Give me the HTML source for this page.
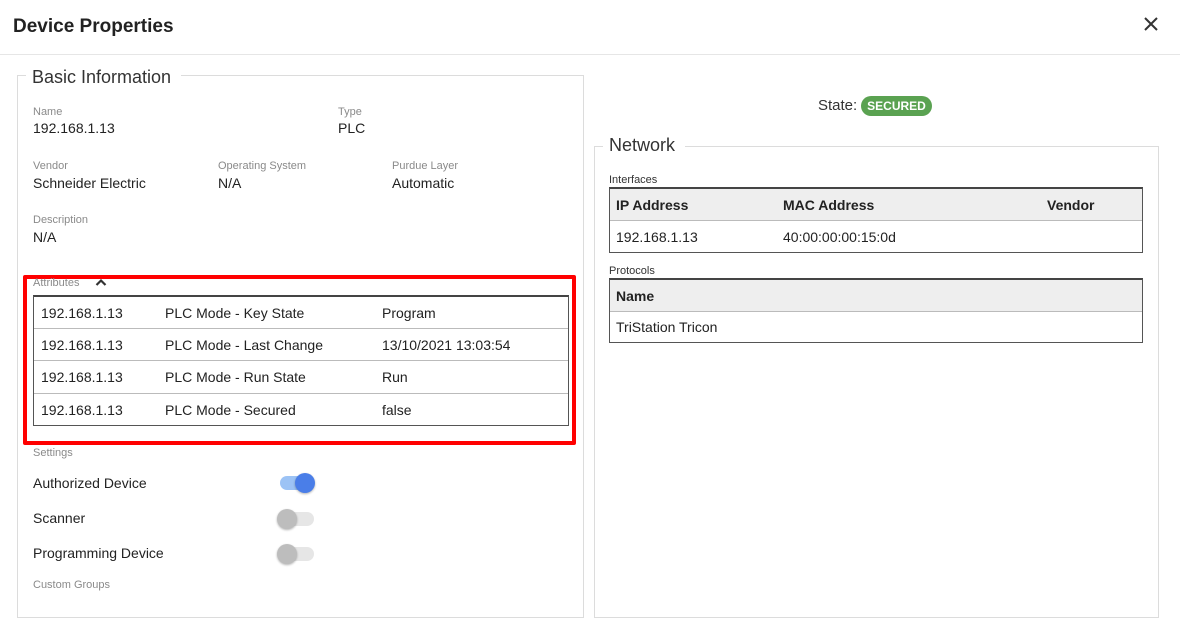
<!DOCTYPE html>
<html><head><meta charset="utf-8"><style>
*{margin:0;padding:0;box-sizing:border-box}
body{width:1180px;height:622px;background:#fff;font-family:"Liberation Sans",sans-serif;color:#222;position:relative;overflow:hidden}
.a{position:absolute;white-space:nowrap}
.lbl{font-size:11px;color:#8a8a8a;line-height:12px}
.val{font-size:14px;color:#222;line-height:16px}
.fs{position:absolute;border:1px solid #dcdcdc}
.leg{position:absolute;background:#fff;padding:0 10px 0 6px;font-size:18px;color:#333;line-height:22px}
.tbl{position:absolute;border:1px solid #555;border-top:2px solid #444}
.row{position:relative;border-bottom:1px solid #bbb;font-size:14px}
.row span{position:absolute;top:50%;transform:translateY(-50%);white-space:nowrap}
.tg{position:absolute;width:34px;height:14px;border-radius:7px}
.kn{position:absolute;width:20px;height:20px;border-radius:50%;top:-3px;box-shadow:0 1px 2px rgba(0,0,0,.3)}
</style></head><body>
<div class="a" style="left:13px;top:16px;font-size:19px;font-weight:bold;color:#222">Device Properties</div>
<svg class="a" style="left:1143px;top:16px" width="16" height="16" viewBox="0 0 16 16"><path d="M2 2L14 14M14 2L2 14" stroke="#333" stroke-width="2"/></svg>
<div class="a" style="left:0;top:54px;width:1180px;height:1px;background:#e6e6e6"></div>

<div class="fs" style="left:17px;top:75px;width:567px;height:543px"></div>
<div class="leg" style="left:26px;top:66px">Basic Information</div>
<div class="a lbl" style="left:33px;top:106px">Name</div>
<div class="a val" style="left:33px;top:120px">192.168.1.13</div>
<div class="a lbl" style="left:338px;top:106px">Type</div>
<div class="a val" style="left:338px;top:120px">PLC</div>
<div class="a lbl" style="left:33px;top:160px">Vendor</div>
<div class="a val" style="left:33px;top:175px">Schneider Electric</div>
<div class="a lbl" style="left:218px;top:160px">Operating System</div>
<div class="a val" style="left:218px;top:175px">N/A</div>
<div class="a lbl" style="left:392px;top:160px">Purdue Layer</div>
<div class="a val" style="left:392px;top:175px">Automatic</div>
<div class="a lbl" style="left:33px;top:214px">Description</div>
<div class="a val" style="left:33px;top:229px">N/A</div>
<div class="tbl" style="left:33px;top:295px;width:536px;height:131px">
<div class="row" style="height:32px"><span style="left:7px">192.168.1.13</span><span style="left:131px">PLC Mode - Key State</span><span style="left:348px">Program</span></div>
<div class="row" style="height:32px"><span style="left:7px">192.168.1.13</span><span style="left:131px">PLC Mode - Last Change</span><span style="left:348px">13/10/2021 13:03:54</span></div>
<div class="row" style="height:33px"><span style="left:7px">192.168.1.13</span><span style="left:131px">PLC Mode - Run State</span><span style="left:348px">Run</span></div>
<div class="row" style="height:31px;border-bottom:none"><span style="left:7px">192.168.1.13</span><span style="left:131px">PLC Mode - Secured</span><span style="left:348px">false</span></div>
</div>
<div class="a" style="left:23px;top:275px;width:553px;height:170px;border:4px solid #f00;border-radius:2px"></div>
<div class="a lbl" style="left:33px;top:277px;z-index:2">Attributes</div>
<svg class="a" style="left:94px;top:278px;z-index:2" width="14" height="9" viewBox="0 0 14 9"><path d="M2.5 7L7 2.5L11.5 7" stroke="#333" stroke-width="2.2" fill="none"/></svg>
<div class="a lbl" style="left:33px;top:447px">Settings</div>
<div class="a val" style="left:33px;top:475px">Authorized Device</div>
<div class="tg" style="left:280px;top:476px;background:#9cc3f5"><div class="kn" style="left:15px;background:#4a7ee8"></div></div>
<div class="a val" style="left:33px;top:510px">Scanner</div>
<div class="tg" style="left:280px;top:512px;background:#e6e6e6"><div class="kn" style="left:-3px;background:#bdbdbd"></div></div>
<div class="a val" style="left:33px;top:545px">Programming Device</div>
<div class="tg" style="left:280px;top:547px;background:#e6e6e6"><div class="kn" style="left:-3px;background:#bdbdbd"></div></div>
<div class="a lbl" style="left:33px;top:579px">Custom Groups</div>

<div class="a" style="left:818px;top:97px;font-size:15px;color:#333">State:</div>
<div class="a" style="left:861px;top:96px;width:71px;height:20px;border-radius:10px;background:#5aa251;color:#fff;font-size:12px;font-weight:bold;line-height:20px;text-align:center">SECURED</div>

<div class="fs" style="left:594px;top:146px;width:565px;height:472px"></div>
<div class="leg" style="left:603px;top:134px">Network</div>
<div class="a" style="left:609px;top:174px;font-size:11px;color:#333">Interfaces</div>
<div class="tbl" style="left:609px;top:187px;width:534px;height:66px">
<div class="row" style="height:32px;background:#eee;font-weight:bold"><span style="left:6px">IP Address</span><span style="left:173px">MAC Address</span><span style="left:437px">Vendor</span></div>
<div class="row" style="height:31px;border-bottom:none"><span style="left:6px">192.168.1.13</span><span style="left:173px">40:00:00:00:15:0d</span></div>
</div>
<div class="a" style="left:609px;top:265px;font-size:11px;color:#333">Protocols</div>
<div class="tbl" style="left:609px;top:278px;width:534px;height:65px">
<div class="row" style="height:32px;background:#eee;font-weight:bold"><span style="left:6px">Name</span></div>
<div class="row" style="height:30px;border-bottom:none"><span style="left:6px">TriStation Tricon</span></div>
</div>
</body></html>
